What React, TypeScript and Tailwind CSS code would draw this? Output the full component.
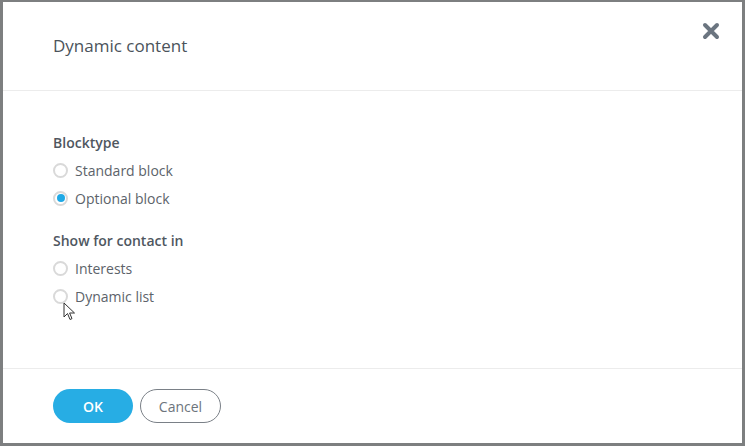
import { useState } from 'react';

const font = { fontFamily: '"Open Sans", "Liberation Sans", sans-serif' };

function Radio({ label, checked, onClick }: { label: string; checked: boolean; onClick: () => void }) {
  return (
    <button onClick={onClick} className="flex items-center h-[28px] gap-[7px] text-left">
      <span className="w-[15px] h-[15px] rounded-full border-2 border-[#d9d9d9] bg-white flex items-center justify-center">
        {checked && <span className="w-[8px] h-[8px] rounded-full bg-[#1fa9e6]" />}
      </span>
      <span className="text-[14px] text-[#5c636a]">{label}</span>
    </button>
  );
}

export default function App() {
  const [block, setBlock] = useState('optional');
  const [show, setShow] = useState('');

  return (
    <div className="w-[745px] h-[446px] bg-[#7d7f80] pt-[2px] pl-[3px] pr-[3px] pb-[3px]" style={font}>
      <div className="relative bg-white h-full flex flex-col">
        <div className="h-[89px] flex items-center justify-between pl-[50px] pr-[22px] border-b border-[#ececec]">
          <h1 className="text-[17px] text-[#4b535b] -mt-[1px]">Dynamic content</h1>
          <button className="self-start mt-[20px] text-[#6b7580]">
            <svg width="18" height="18" viewBox="0 0 18 18">
              <path d="M3 3 L15 15 M15 3 L3 15" stroke="currentColor" strokeWidth="4" strokeLinecap="round" />
            </svg>
          </button>
        </div>

        <div className="flex-1 pl-[50px] pt-[41px]">
          <div className="text-[14px] font-semibold text-[#4f575f] h-[22px] leading-[22px]">Blocktype</div>
          <div className="flex flex-col mt-[2px]">
            <Radio label="Standard block" checked={block === 'standard'} onClick={() => setBlock('standard')} />
            <Radio label="Optional block" checked={block === 'optional'} onClick={() => setBlock('optional')} />
          </div>
          <div className="text-[14px] font-semibold text-[#4f575f] h-[22px] leading-[22px] mt-[18px]">Show for contact in</div>
          <div className="flex flex-col mt-[2px]">
            <Radio label="Interests" checked={show === 'interests'} onClick={() => setShow('interests')} />
            <Radio label="Dynamic list" checked={show === 'list'} onClick={() => setShow('list')} />
          </div>
        </div>

        <div className="h-[75px] border-t border-[#ececec] pl-[50px] pt-[20px] flex gap-[7px]">
          <button className="w-[80px] h-[34px] rounded-full bg-[#27ade4] text-white text-[14px] font-semibold">OK</button>
          <button className="w-[81px] h-[34px] rounded-full border border-[#7a8087] text-[#6c747c] text-[14px]">Cancel</button>
        </div>

        <svg className="absolute left-[60px] top-[300px]" width="14" height="20" viewBox="0 0 14 20">
          <path d="M1 1 L1 15 L4.5 11.5 L7 17.5 L9 16.6 L6.6 11 L11.5 11 Z" fill="white" stroke="#333" strokeWidth="1" strokeLinejoin="round" />
        </svg>
      </div>
    </div>
  );
}
